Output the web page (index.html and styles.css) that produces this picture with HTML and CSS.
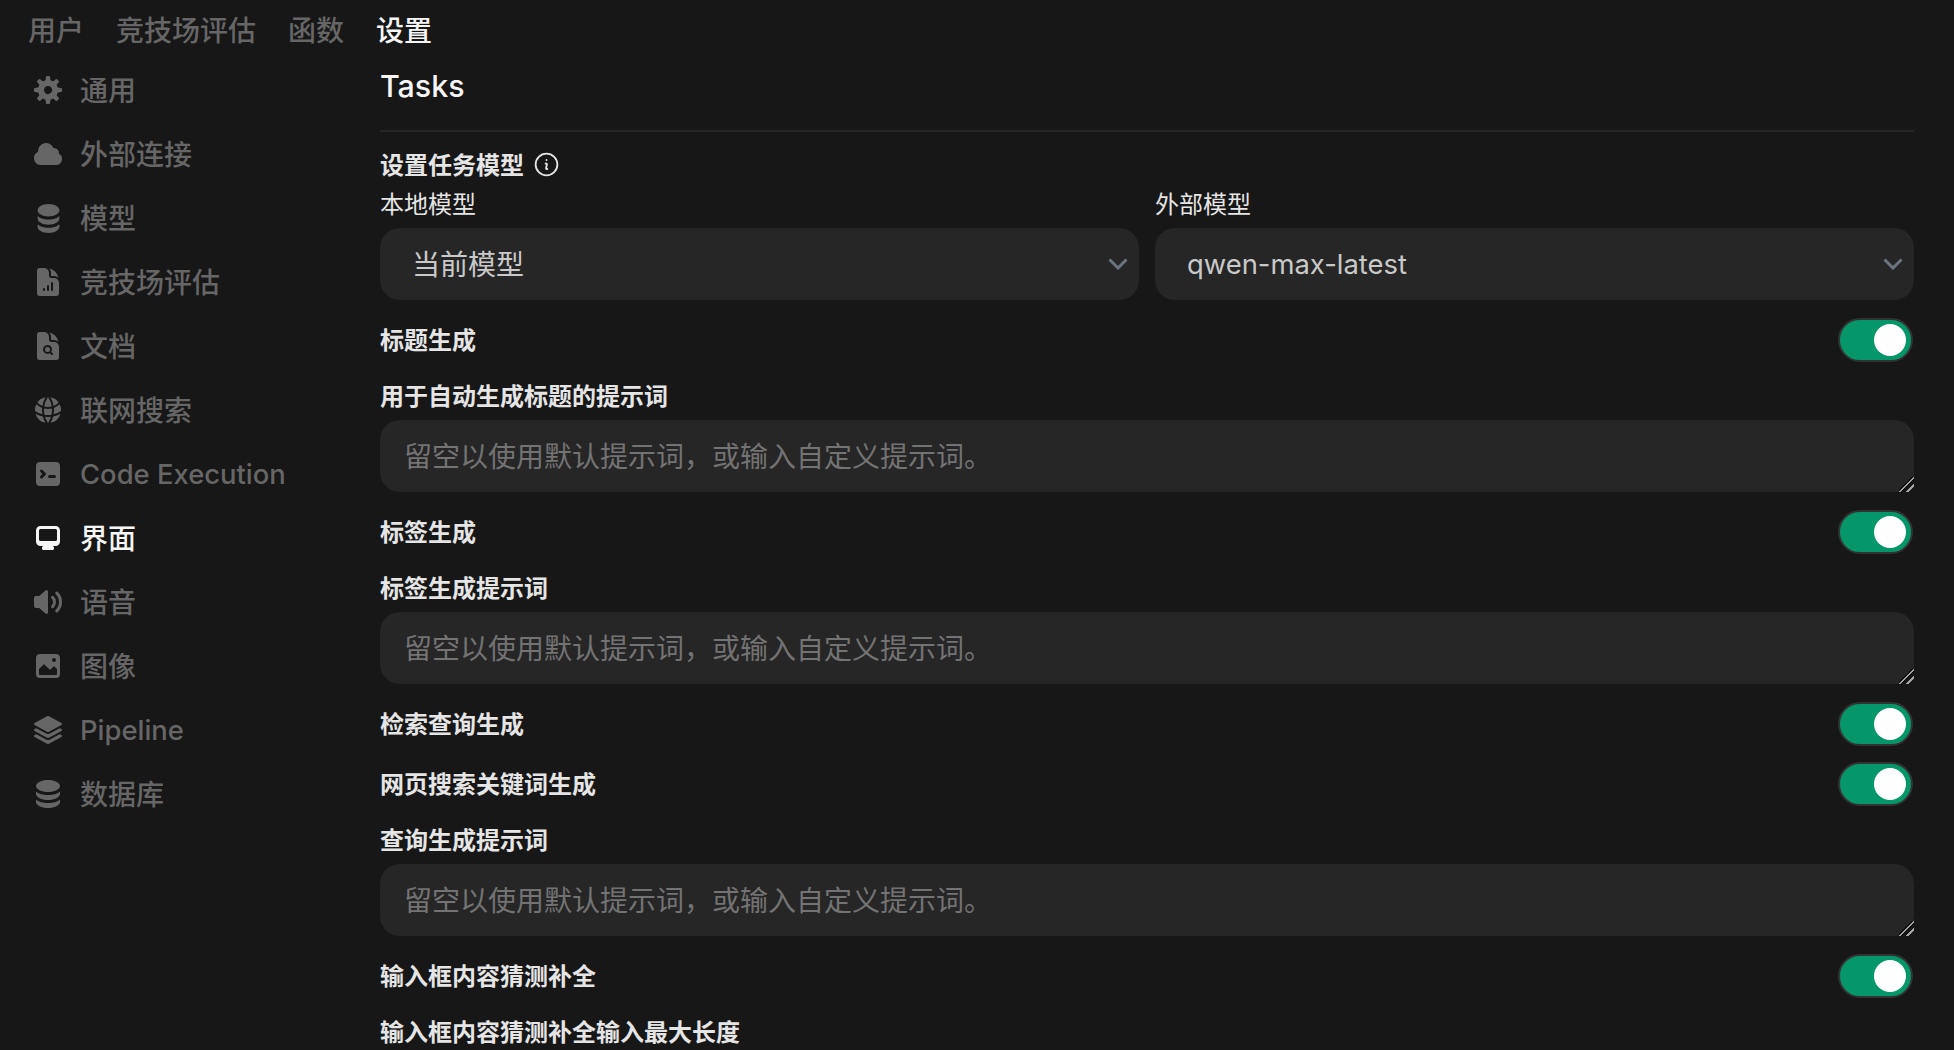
FILE: index.html
```html
<!DOCTYPE html>
<html lang="zh-CN">
  <head>
    <meta charset="UTF-8" />
    <meta name="viewport" content="width=device-width, initial-scale=1.0" />
    <title>设置</title>
    <link rel="stylesheet" href="styles.css">
  </head>
  <body>
    <nav class="tabs">
      <a class="tab">用户</a>
      <a class="tab">竞技场评估</a>
      <a class="tab">函数</a>
      <a class="tab active">设置</a>
    </nav>

    <div class="layout">
      <aside class="sidebar">
        <a class="side-item">
          <svg class="icon" viewBox="0 0 16 16"><path fill-rule="evenodd" d="M6.955 1.45A.5.5 0 0 1 7.452 1h1.096a.5.5 0 0 1 .497.45l.17 1.699c.484.12.94.312 1.356.562l1.321-1.081a.5.5 0 0 1 .67.033l.774.775a.5.5 0 0 1 .034.67l-1.08 1.32c.25.417.44.873.561 1.357l1.699.17a.5.5 0 0 1 .45.497v1.096a.5.5 0 0 1-.45.497l-1.699.17c-.12.484-.312.94-.562 1.356l1.082 1.322a.5.5 0 0 1-.034.67l-.774.774a.5.5 0 0 1-.67.033l-1.322-1.08c-.416.25-.872.44-1.356.561l-.17 1.699a.5.5 0 0 1-.497.45H7.452a.5.5 0 0 1-.497-.45l-.17-1.699a4.973 4.973 0 0 1-1.356-.562L4.108 13.37a.5.5 0 0 1-.67-.033l-.774-.775a.5.5 0 0 1-.034-.67l1.08-1.32a4.971 4.971 0 0 1-.561-1.357l-1.699-.17A.5.5 0 0 1 1 8.548V7.452a.5.5 0 0 1 .45-.497l1.699-.17c.12-.484.312-.94.562-1.356L2.629 4.107a.5.5 0 0 1 .034-.67l.774-.774a.5.5 0 0 1 .67-.033L5.43 3.71a4.97 4.97 0 0 1 1.356-.561l.17-1.699ZM6 8c0 .538.212 1.026.558 1.385l.057.057a2 2 0 0 0 2.828-2.828l-.058-.056A2 2 0 0 0 6 8Z"/></svg>
          <span class="cjk">通用</span>
        </a>
        <a class="side-item">
          <svg class="icon" viewBox="0 0 24 24"><path d="M4.5 9.75a6 6 0 0 1 11.573-2.226 3.75 3.75 0 0 1 4.133 4.303A4.5 4.5 0 0 1 18 20.25H6.75a5.25 5.25 0 0 1-2.23-10.004 6.072 6.072 0 0 1-.02-.496Z"/></svg>
          <span class="cjk">外部连接</span>
        </a>
        <a class="side-item">
          <svg class="icon narrow" viewBox="0 0 16 16" preserveAspectRatio="none"><path d="M8 7c3.314 0 6-1.343 6-3s-2.686-3-6-3-6 1.343-6 3 2.686 3 6 3Z"/><path d="M8 8.5c1.84 0 3.579-.37 4.914-1.037A6.33 6.33 0 0 0 14 6.78V8c0 1.657-2.686 3-6 3S2 9.657 2 8V6.78c.346.273.72.5 1.087.683C4.42 8.131 6.16 8.5 8 8.5Z"/><path d="M8 12.5c1.84 0 3.579-.37 4.914-1.037.366-.183.74-.41 1.086-.684V12c0 1.657-2.686 3-6 3s-6-1.343-6-3v-1.22c.346.273.72.5 1.087.683C4.42 12.131 6.16 12.5 8 12.5Z"/></svg>
          <span class="cjk">模型</span>
        </a>
        <a class="side-item">
          <svg class="icon" viewBox="0 0 24 24"><path fill-rule="evenodd" d="M5.625 1.5c-1.036 0-1.875.84-1.875 1.875v17.25c0 1.035.84 1.875 1.875 1.875h12.75c1.035 0 1.875-.84 1.875-1.875V12.75A3.75 3.75 0 0 0 16.5 9h-1.875a1.875 1.875 0 0 1-1.875-1.875V5.25A3.75 3.75 0 0 0 9 1.5H5.625ZM9.75 17.25a.75.75 0 0 0-1.5 0V18a.75.75 0 0 0 1.5 0v-.75Zm2.25-3a.75.75 0 0 1 .75.75v3a.75.75 0 0 1-1.5 0v-3a.75.75 0 0 1 .75-.75Zm3.75-1.5a.75.75 0 0 0-1.5 0V18a.75.75 0 0 0 1.5 0v-5.25Z"/><path d="M14.25 5.25a5.23 5.23 0 0 0-1.279-3.434 9.768 9.768 0 0 1 6.963 6.963A5.23 5.23 0 0 0 16.5 7.5h-1.875a.375.375 0 0 1-.375-.375V5.25Z"/></svg>
          <span class="cjk">竞技场评估</span>
        </a>
        <a class="side-item">
          <svg class="icon" viewBox="0 0 24 24"><path d="M11.625 16.5a1.875 1.875 0 1 0 0-3.75 1.875 1.875 0 0 0 0 3.75Z"/><path fill-rule="evenodd" d="M5.625 1.5H9a3.75 3.75 0 0 1 3.75 3.75v1.875c0 1.036.84 1.875 1.875 1.875H16.5a3.75 3.75 0 0 1 3.75 3.75v7.875c0 1.035-.84 1.875-1.875 1.875H5.625a1.875 1.875 0 0 1-1.875-1.875V3.375c0-1.036.84-1.875 1.875-1.875Zm6 16.5c.66 0 1.277-.19 1.797-.518l1.048 1.048a.75.75 0 0 0 1.06-1.06l-1.047-1.048A3.375 3.375 0 1 0 11.625 18Z"/><path d="M14.25 5.25a5.23 5.23 0 0 0-1.279-3.434 9.768 9.768 0 0 1 6.963 6.963A5.23 5.23 0 0 0 16.5 7.5h-1.875a.375.375 0 0 1-.375-.375V5.25Z"/></svg>
          <span class="cjk">文档</span>
        </a>
        <a class="side-item">
          <svg class="icon" viewBox="0 0 24 24"><path d="M21.721 12.752a9.711 9.711 0 0 0-.945-5.003 12.754 12.754 0 0 1-4.339 2.708 18.991 18.991 0 0 1-.214 4.772 17.165 17.165 0 0 0 5.498-2.477ZM14.634 15.55a17.324 17.324 0 0 0 .332-4.647c-.952.227-1.945.347-2.966.347-1.021 0-2.014-.12-2.966-.347a17.515 17.515 0 0 0 .332 4.647 17.385 17.385 0 0 0 5.268 0ZM9.772 17.119a18.963 18.963 0 0 0 4.456 0A17.182 17.182 0 0 1 12 21.724a17.18 17.18 0 0 1-2.228-4.605ZM7.777 15.23a18.87 18.87 0 0 1-.214-4.774 12.753 12.753 0 0 1-4.34-2.708 9.711 9.711 0 0 0-.944 5.004 17.165 17.165 0 0 0 5.498 2.477ZM21.356 14.752a9.765 9.765 0 0 1-7.478 6.817 18.64 18.64 0 0 0 1.988-4.718 18.627 18.627 0 0 0 5.49-2.098ZM2.644 14.752c1.682.971 3.53 1.688 5.49 2.099a18.64 18.64 0 0 0 1.988 4.718 9.765 9.765 0 0 1-7.478-6.816ZM13.878 2.43a9.755 9.755 0 0 1 6.116 3.986 11.267 11.267 0 0 1-3.746 2.504 18.63 18.63 0 0 0-2.37-6.49ZM12 2.276a17.152 17.152 0 0 1 2.805 7.121c-.897.23-1.837.353-2.805.353-.968 0-1.908-.122-2.805-.353A17.151 17.151 0 0 1 12 2.276ZM10.122 2.43a18.629 18.629 0 0 0-2.37 6.49 11.266 11.266 0 0 1-3.746-2.504 9.754 9.754 0 0 1 6.116-3.985Z"/></svg>
          <span class="cjk">联网搜索</span>
        </a>
        <a class="side-item">
          <svg class="icon" viewBox="0 0 16 16"><path fill-rule="evenodd" d="M2 4a2 2 0 0 1 2-2h8a2 2 0 0 1 2 2v8a2 2 0 0 1-2 2H4a2 2 0 0 1-2-2V4Zm2.22 1.97a.75.75 0 0 0 0 1.06l.97.97-.97.97a.75.75 0 1 0 1.06 1.06l1.5-1.5a.75.75 0 0 0 0-1.06l-1.5-1.5a.75.75 0 0 0-1.06 0ZM8.75 8.5a.75.75 0 0 0 0 1.5h2.5a.75.75 0 0 0 0-1.5h-2.5Z"/></svg>
          <span>Code Execution</span>
        </a>
        <a class="side-item active">
          <svg class="icon" viewBox="0 0 16 16"><path fill-rule="evenodd" d="M2 4.25A2.25 2.25 0 0 1 4.25 2h7.5A2.25 2.25 0 0 1 14 4.25v5.5A2.25 2.25 0 0 1 11.75 12h-1.312c.1.128.21.248.328.36a.75.75 0 0 1 .234.545v.345a.75.75 0 0 1-.75.75h-4.5a.75.75 0 0 1-.75-.75v-.345a.75.75 0 0 1 .234-.545c.118-.111.228-.232.328-.36H4.25A2.25 2.25 0 0 1 2 9.75v-5.5Zm2.25-.75a.75.75 0 0 0-.75.75v4.5c0 .414.336.75.75.75h7.5a.75.75 0 0 0 .75-.75v-4.5a.75.75 0 0 0-.75-.75h-7.5Z"/></svg>
          <span class="cjk">界面</span>
        </a>
        <a class="side-item">
          <svg class="icon" viewBox="0 0 16 16"><path d="M7.557 2.066A.75.75 0 0 1 8 2.75v10.5a.75.75 0 0 1-1.248.56L3.59 11H2a1 1 0 0 1-1-1V6a1 1 0 0 1 1-1h1.59l3.162-2.81a.75.75 0 0 1 .805-.124ZM12.95 3.05a.75.75 0 1 0-1.06 1.06 5.5 5.5 0 0 1 0 7.78.75.75 0 1 0 1.06 1.06 7 7 0 0 0 0-9.9Z"/><path d="M10.828 5.172a.75.75 0 1 0-1.06 1.06 2.5 2.5 0 0 1 0 3.536.75.75 0 1 0 1.06 1.06 4 4 0 0 0 0-5.656Z"/></svg>
          <span class="cjk">语音</span>
        </a>
        <a class="side-item">
          <svg class="icon" viewBox="0 0 16 16"><path fill-rule="evenodd" d="M2 4a2 2 0 0 1 2-2h8a2 2 0 0 1 2 2v8a2 2 0 0 1-2 2H4a2 2 0 0 1-2-2V4Zm10.5 5.707a.5.5 0 0 0-.146-.353l-1-1a.5.5 0 0 0-.708 0L9.354 9.646a.5.5 0 0 1-.708 0L6.354 7.354a.5.5 0 0 0-.708 0l-2 2a.5.5 0 0 0-.146.353V12a.5.5 0 0 0 .5.5h8a.5.5 0 0 0 .5-.5V9.707ZM12 5a1 1 0 1 1-2 0 1 1 0 0 1 2 0Z"/></svg>
          <span class="cjk">图像</span>
        </a>
        <a class="side-item">
          <svg class="icon" viewBox="0 0 24 24"><path d="M11.644 1.59a.75.75 0 0 1 .712 0l9.75 5.25a.75.75 0 0 1 0 1.32l-9.75 5.25a.75.75 0 0 1-.712 0l-9.75-5.25a.75.75 0 0 1 0-1.32l9.75-5.25Z"/><path d="m3.265 10.602 7.668 4.129a2.25 2.25 0 0 0 2.134 0l7.668-4.13 1.37.739a.75.75 0 0 1 0 1.32l-9.75 5.25a.75.75 0 0 1-.71 0l-9.75-5.25a.75.75 0 0 1 0-1.32l1.37-.738Z"/><path d="m10.933 19.231-7.668-4.13-1.37.739a.75.75 0 0 0 0 1.32l9.75 5.25c.221.12.489.12.71 0l9.75-5.25a.75.75 0 0 0 0-1.32l-1.37-.738-7.668 4.13a2.25 2.25 0 0 1-2.134-.001Z"/></svg>
          <span>Pipeline</span>
        </a>
        <a class="side-item">
          <svg class="icon" viewBox="0 0 16 16"><path d="M8 7c3.314 0 6-1.343 6-3s-2.686-3-6-3-6 1.343-6 3 2.686 3 6 3Z"/><path d="M8 8.5c1.84 0 3.579-.37 4.914-1.037A6.33 6.33 0 0 0 14 6.78V8c0 1.657-2.686 3-6 3S2 9.657 2 8V6.78c.346.273.72.5 1.087.683C4.42 8.131 6.16 8.5 8 8.5Z"/><path d="M8 12.5c1.84 0 3.579-.37 4.914-1.037.366-.183.74-.41 1.086-.684V12c0 1.657-2.686 3-6 3s-6-1.343-6-3v-1.22c.346.273.72.5 1.087.683C4.42 12.131 6.16 12.5 8 12.5Z"/></svg>
          <span class="cjk">数据库</span>
        </a>
      </aside>

      <main class="main">
        <h2 class="title">Tasks</h2>
        <hr class="divider" />

        <div class="task-model">
          <div class="label-row">
            设置任务模型
            <svg class="info" viewBox="0 0 24 24" fill="none" stroke="currentColor" stroke-width="1.5"><path stroke-linecap="round" stroke-linejoin="round" d="m11.25 11.25.041-.02a.75.75 0 0 1 1.063.852l-.708 2.836a.75.75 0 0 0 1.063.853l.041-.021M21 12a9 9 0 1 1-18 0 9 9 0 0 1 18 0Zm-9-3.75h.008v.008H12V8.25Z"/></svg>
          </div>
          <div class="model-grid">
            <div>
              <div class="sub-label">本地模型</div>
              <div class="select-wrap">
                <select class="select select-cjk"><option>当前模型</option></select>
                <svg class="chevron" viewBox="0 0 20 12"><path d="M1.5 1.5 10 10l8.5-8.5"/></svg>
              </div>
            </div>
            <div>
              <div class="sub-label">外部模型</div>
              <div class="select-wrap">
                <select class="select"><option>qwen-max-latest</option></select>
                <svg class="chevron" viewBox="0 0 20 12"><path d="M1.5 1.5 10 10l8.5-8.5"/></svg>
              </div>
            </div>
          </div>
        </div>

        <div class="switch-row">
          <span class="switch-text">标题生成</span>
          <span class="switch"><span class="knob"></span></span>
        </div>
        <div class="field">
          <div class="label">用于自动生成标题的提示词</div>
          <textarea class="prompt" rows="1" placeholder="留空以使用默认提示词，或输入自定义提示词。"></textarea>
        </div>

        <div class="switch-row">
          <span class="switch-text">标签生成</span>
          <span class="switch"><span class="knob"></span></span>
        </div>
        <div class="field">
          <div class="label">标签生成提示词</div>
          <textarea class="prompt" rows="1" placeholder="留空以使用默认提示词，或输入自定义提示词。"></textarea>
        </div>

        <div class="switch-row">
          <span class="switch-text">检索查询生成</span>
          <span class="switch"><span class="knob"></span></span>
        </div>
        <div class="switch-row tight">
          <span class="switch-text">网页搜索关键词生成</span>
          <span class="switch"><span class="knob"></span></span>
        </div>
        <div class="field">
          <div class="label">查询生成提示词</div>
          <textarea class="prompt" rows="1" placeholder="留空以使用默认提示词，或输入自定义提示词。"></textarea>
        </div>

        <div class="switch-row">
          <span class="switch-text">输入框内容猜测补全</span>
          <span class="switch"><span class="knob"></span></span>
        </div>
        <div class="field">
          <div class="label">输入框内容猜测补全输入最大长度</div>
        </div>
      </main>
    </div>
  </body>
</html>
```

FILE: styles.css
```css
html,
body {
  height: 100%;
}
body {
  margin: 0;
  overflow: hidden;
  background-color: #171717;
  color: #e5e5e5;
  font-family: Inter, "Noto Sans CJK SC", sans-serif;
}

/* top tabs */
.tabs {
  display: flex;
  align-items: center;
  gap: 32px;
  height: 58px;
  padding-left: 28px;
  box-sizing: border-box;
  font-size: 28px;
  font-weight: 500;
  color: #666;
}
.tab.active {
  color: #f5f5f5;
}

.layout {
  display: flex;
}

/* sidebar */
.sidebar {
  width: 380px;
  flex-shrink: 0;
  padding-left: 32px;
  box-sizing: border-box;
}
.side-item {
  display: flex;
  align-items: center;
  gap: 16px;
  height: 64px;
  font-size: 27.4px;
  font-weight: 500;
  color: #666;
}
.side-item.active {
  color: #f5f5f5;
}
.cjk {
  font-size: 28px;
  margin-top: -3px;
}
.icon {
  width: 32px;
  height: 32px;
  flex-shrink: 0;
  fill: currentColor;
}
.icon.narrow {
  width: 29px;
  height: 33px;
  margin: 0 1.5px;
}

/* main column */
.main {
  flex: 1;
  padding-right: 40px;
  display: flex;
  flex-direction: column;
  gap: 18px;
}
.title {
  margin: 0;
  font-size: 30.4px;
  font-weight: 500;
  line-height: 57px;
  color: #f5f5f5;
}
.divider {
  margin: -3px 0 -1px;
  border: none;
  height: 2px;
  background: #262626;
}
.label-row,
.sub-label,
.label,
.switch-text {
  padding-top: 2px;
  font-size: 24px;
  line-height: 30px;
  color: #e5e5e5;
}
.label-row,
.label,
.switch-text {
  font-weight: 600;
}
.label-row {
  display: flex;
  align-items: center;
  gap: 8px;
  margin-bottom: 7px;
}
.info {
  width: 29px;
  height: 29px;
  margin-top: -4px;
}
.sub-label {
  margin-bottom: 8px;
}
.model-grid {
  display: grid;
  grid-template-columns: 1fr 1fr;
  gap: 16px;
}

/* select */
.select-wrap {
  position: relative;
}
.select {
  display: block;
  width: 100%;
  height: 72px;
  padding: 0 60px 0 32px;
  border: none;
  border-radius: 20px;
  background: #262626;
  color: #c9c9c9;
  font-family: inherit;
  font-size: 27.4px;
  appearance: none;
  outline: none;
}
.select-cjk {
  padding-top: 2px;
  font-size: 28px;
}
.chevron {
  position: absolute;
  right: 11px;
  top: 30px;
  width: 20px;
  height: 12px;
  fill: none;
  stroke: #6b7280;
  stroke-width: 3;
}

/* switch */
.switch-row {
  display: flex;
  align-items: center;
  justify-content: space-between;
  height: 44px;
}
.switch-row.tight {
  margin-top: -2px;
}
.switch {
  display: flex;
  align-items: center;
  justify-content: flex-end;
  width: 75px;
  height: 44px;
  padding: 0 5px;
  margin-right: 1px;
  box-sizing: border-box;
  border: 2px solid #333;
  border-radius: 22px;
  background: #059669;
}
.knob {
  width: 32px;
  height: 32px;
  border-radius: 50%;
  background: #fff;
}

/* prompt textareas */
.field .label {
  margin-bottom: 8px;
}
.prompt {
  display: block;
  width: 100%;
  height: 72px;
  padding: 19px 24px 17px;
  box-sizing: border-box;
  border: none;
  border-radius: 20px;
  background: #262626;
  color: #e5e5e5;
  font-family: inherit;
  font-size: 28px;
  line-height: 36px;
  resize: vertical;
  outline: none;
}
.prompt::placeholder {
  color: #737373;
}
.prompt::-webkit-resizer {
  background: linear-gradient(135deg, transparent 42%, #111 42% 47%, #a3a3a3 47% 56%, #111 56% 61%, transparent 61% 73%, #a3a3a3 73% 82%, transparent 82%);
}
```
